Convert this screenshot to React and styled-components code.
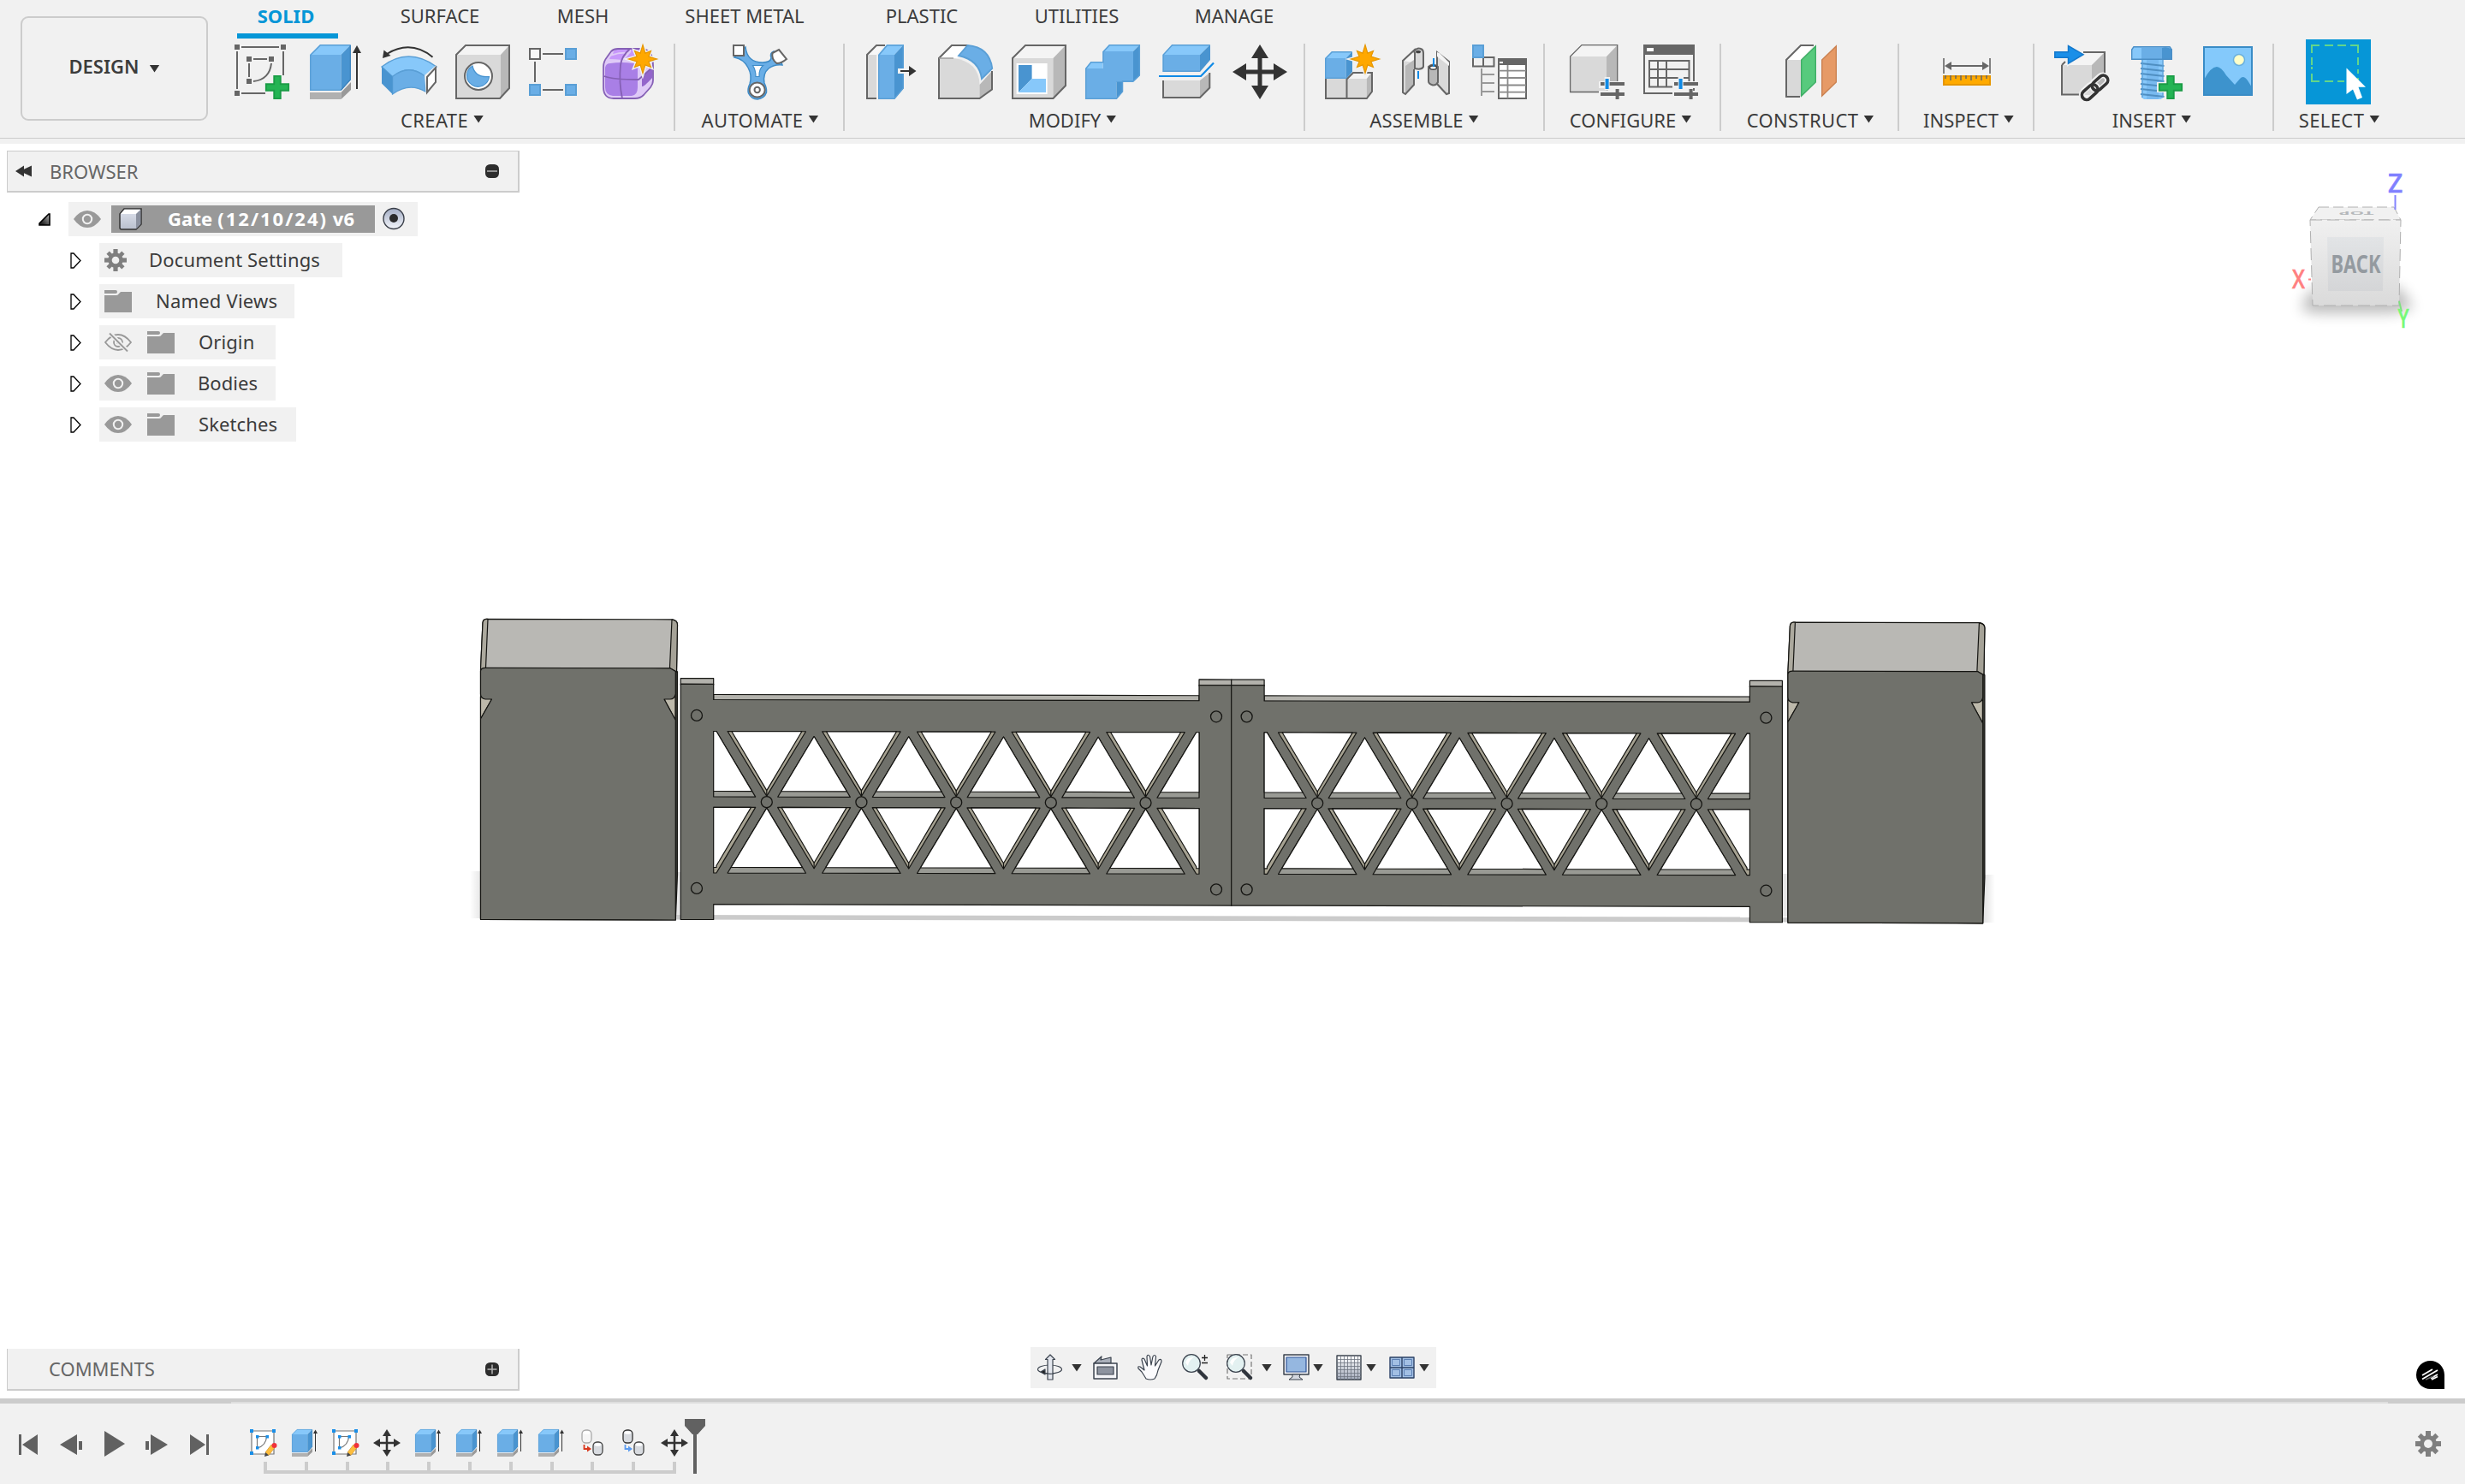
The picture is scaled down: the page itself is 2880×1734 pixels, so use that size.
import React from "react";
import styled, { createGlobalStyle } from "styled-components";

const GlobalStyle = createGlobalStyle`
  * { box-sizing: border-box; }
  body { margin: 0; background: #ffffff; }
  svg { display: block; }
`;

const C = {
  bar: "#f1f1f1",
  line: "#cccccc",
  text: "#3c3c3c",
  muted: "#666666",
  accent: "#0696d7",
  blue: "#6aaee6",
  blueTop: "#87c8fa",
  blueSide: "#4994d0",
  blueEdge: "#5a9fd6",
  ink: "#333333",
  face: "#d9d9d9",
  side: "#b8b8b8",
};

/* ---------- shell ---------- */

const Screen = styled.div`
  display: flex;
  flex-direction: column;
  width: 2880px;
  height: 1734px;
  overflow: hidden;
  background: #ffffff;
  color: ${C.text};
  font-family: "Noto Sans", "Open Sans", sans-serif;
  font-size: 22px;
  line-height: 30px;
  white-space: nowrap;
`;

const Toolbar = styled.header`
  display: flex;
  height: 168px;
  flex: none;
  padding-left: 24px;
  background: linear-gradient(${C.line}, ${C.line}) 0 161px / 100% 1px no-repeat ${C.bar};
`;

const Workspace = styled.button`
  display: flex;
  align-items: center;
  justify-content: center;
  gap: 12px;
  width: 219px;
  height: 122px;
  margin: 19px 3px 0 0;
  padding: 0 0 6px;
  border: 2px solid ${C.line};
  border-radius: 9px;
  background: transparent;
  color: ${C.text};
  font: 600 22px/30px "Noto Sans", sans-serif;
`;

const Caret = styled.i`
  width: 12px;
  height: 9px;
  flex: none;
  background: ${C.ink};
  clip-path: polygon(0 0, 100% 0, 50% 100%);
  transform: translateY(${(p) => p.$dy || 0}px);
`;

const Ribbon = styled.div`
  display: flex;
  flex-direction: column;
`;

const Tabs = styled.nav`
  display: flex;
  height: 45px;
  padding-left: 31px;
`;

const Tab = styled.a`
  display: flex;
  justify-content: center;
  width: ${(p) => p.$w}px;
  height: 45px;
  margin-left: ${(p) => p.$gap || 0}px;
  padding-top: 3px;
  padding-right: ${(p) => (p.$active ? 4 : 0)}px;
  border-bottom: 6px solid ${(p) => (p.$active ? C.accent : "transparent")};
  color: ${(p) => (p.$active ? C.accent : C.text)};
  font-weight: ${(p) => (p.$active ? 700 : 400)};
`;

const Groups = styled.div`
  display: flex;
  padding-top: 1px;
`;

const Group = styled.section`
  display: flex;
  flex-direction: column;
  width: ${(p) => p.$w}px;
  height: 112px;
  background: ${(p) => (p.$last ? "none" : `linear-gradient(${C.line}, ${C.line}) right 5px / 2px 102px no-repeat`)};
`;

const IconRow = styled.div`
  display: flex;
  flex: none;
  gap: 22px;
  height: 76px;
  padding: 6px 0 0 ${(p) => p.$pad}px;
`;

const GroupLabel = styled.div`
  display: flex;
  align-items: center;
  justify-content: center;
  gap: 6px;
  height: 30px;
  margin-top: 3px;
  padding-left: ${(p) => Math.max(0, (p.$nudge || 0) * 2)}px;
  padding-right: ${(p) => Math.max(0, -(p.$nudge || 0) * 2)}px;
  letter-spacing: ${(p) => p.$ls || 0}px;
`;

const SelectTile = styled.div`
  width: 76px;
  height: 76px;
  margin: -6px 0 0 -6px;
  padding: 6px;
  background: ${C.accent};
`;

const Viewport = styled.main`
  position: relative;
  flex: 1;
  background: #ffffff;
`;

const Scene = styled.svg`
  position: absolute;
  left: 0;
  top: 0;
`;

/* ---------- browser ---------- */

const BrowserDock = styled.aside`
  position: absolute;
  left: 8px;
  top: 8px;
  display: flex;
  flex-direction: column;
  width: 599px;
`;

const PanelBar = styled.div`
  display: flex;
  align-items: center;
  gap: 20px;
  width: 599px;
  height: 49px;
  padding: 0 22px 0 ${(p) => p.$pad}px;
  border: 1px solid ${C.line};
  border-width: ${(p) => (p.$flat ? "0 2px 2px 1px" : "1px 2px 2px 1px")};
  background: ${C.bar};
  color: ${C.muted};
`;

const PanelTitle = styled.span`
  flex: 1;
  padding-bottom: 1px;
`;

const Tree = styled.ul`
  display: flex;
  flex-direction: column;
  gap: 8px;
  margin: 0;
  padding: 11px 0 0 36px;
  list-style: none;
`;

const TreeRow = styled.li`
  display: flex;
  align-items: center;
  height: 40px;
  padding-left: ${(p) => (p.$root ? 1 : 38)}px;
`;

const Twisty = styled.span`
  display: flex;
  width: ${(p) => (p.$root ? 35 : 34)}px;
  flex: none;
`;

const Chip = styled.div`
  display: flex;
  align-items: center;
  width: ${(p) => p.$w}px;
  height: 40px;
  padding-left: 6px;
  background: ${C.bar};
`;

const Glyph = styled.span`
  display: flex;
  flex: none;
  width: 32px;
  margin-right: ${(p) => p.$after || 0}px;
`;

const NodeText = styled.span`
  padding-bottom: 2px;
  letter-spacing: ${(p) => p.$ls || 0}px;
`;

const Selected = styled.div`
  display: flex;
  align-items: center;
  gap: 30px;
  width: 308px;
  height: 32px;
  margin-right: 8px;
  padding-left: 9px;
  background: #999999;
  color: #ffffff;
  font-weight: 700;
`;

const DateRun = styled.span`
  letter-spacing: 2px;
`;

const CommentsDock = styled.aside`
  position: absolute;
  left: 8px;
  bottom: 9px;
`;

/* ---------- navigation bar ---------- */

const NavBar = styled.div`
  position: absolute;
  left: 1204px;
  bottom: 12px;
  display: flex;
  align-items: center;
  width: 474px;
  height: 48px;
  background: ${C.bar};
`;

const NavItem = styled.span`
  display: flex;
  align-items: center;
  margin-left: ${(p) => p.$ml}px;
  gap: ${(p) => p.$gap || 0}px;
`;

const Badge = styled.div`
  position: absolute;
  right: 24px;
  bottom: 11px;
`;

const CubeHolder = styled.div`
  position: absolute;
  left: 2640px;
  top: 12px;
`;

/* ---------- timeline ---------- */

const Timeline = styled.footer`
  display: flex;
  flex: none;
  height: 100px;
  border-top: 4px solid ${C.line};
  background:
    linear-gradient(${C.line}, ${C.line}) 0 0 / 270px 2px no-repeat,
    linear-gradient(${C.line}, ${C.line}) 2790px 0 / 90px 2px no-repeat,
    linear-gradient(#dedede, #dedede) 0 0 / 100% 2px no-repeat,
    ${C.bar};
`;

const Player = styled.div`
  display: flex;
  width: 292px;
  padding: 34px 0 0 22px;
`;

const PlayerButton = styled.span`
  width: ${(p) => p.$w}px;
  margin-right: ${(p) => p.$mr}px;
`;

const Track = styled.div`
  display: flex;
  flex-direction: column;
  width: 512px;
  padding-top: 32px;
`;

const Features = styled.div`
  display: flex;
  gap: 16px;
`;

const Ruler = styled.div`
  display: flex;
  justify-content: space-between;
  width: 482px;
  height: 14px;
  margin: 6px 0 0 16px;
  border-bottom: 4px solid ${C.line};
`;

const Notch = styled.i`
  width: 4px;
  height: 10px;
  background: ${C.line};
`;

const Playhead = styled.svg`
  margin: 20px 0 0 -4px;
`;

const Settings = styled.span`
  margin: 34px 28px 0 auto;
`;

/* ---------- toolbar icons ---------- */

const Icon = ({ children, size = 64, box = 64 }) => (
  <svg width={size} height={size} viewBox={`0 0 ${box} ${box}`} fill="none" overflow="visible">
    {children}
  </svg>
);

const Plus = () => (
  <path
    d="M46 36h8v10h10v8H54v10h-8V54H36v-8h10z"
    fill="#24b454"
    stroke="#1a9c46"
    strokeWidth="2"
    transform="translate(50 50) scale(.94) translate(-50 -50)"
  />
);

const PlusHalo = () => <path d="M44 34h12v10h10v12H56v10H44V56H34V44h10z" fill={C.bar} />;

const Spark = ({ x, y }) => {
  const pts = [];
  for (let i = 0; i < 16; i += 1) {
    const r = i % 2 ? 7.5 : i % 4 === 0 ? 16.5 : 13.5;
    const a = (i * Math.PI) / 8 - Math.PI / 2;
    pts.push(`${(x + r * Math.cos(a)).toFixed(1)},${(y + r * Math.sin(a)).toFixed(1)}`);
  }
  return (
    <g>
      <polygon points={pts.join(" ")} fill={C.bar} stroke={C.bar} strokeWidth="4" />
      <polygon points={pts.join(" ")} fill="#ffa800" stroke="#e69600" strokeWidth="1.2" />
    </g>
  );
};

const SketchIcon = () => (
  <Icon>
    <g fill="#666">
      <path d="M0 0h6v6H0zM54 0h6v6h-6zM0 54h6v6H0zM14 14h6v6h-6zM40 14h6v6h-6zM14 40h6v6h-6z" />
    </g>
    <path d="M8 3h44M3 8v44M57 8v28M8 57h28M22 17h16M17 22v16M43 22q-2 19-21 21" stroke="#666" strokeWidth="2" />
    <Plus />
  </Icon>
);

const Extrude = () => (
  <g>
    <path d="M2 56h36.500v8H2z" fill="#b0b0b0" />
    <path d="M38.500 56L50 44v9L38.500 64z" fill="#999" />
    <path d="M2 12h36.500v42H2z" fill={C.blue} />
    <path d="M2 12L14 0h36L38.500 12z" fill={C.blueTop} />
    <path d="M38.500 12L50 0v41L38.500 54z" fill={C.blueSide} />
    <path d="M2.800 12.300L14.300.800h35M2.800 12v41.200h35.700" stroke={C.blueEdge} strokeWidth="1.400" />
    <path d="M49.300 1v40L38.500 53" stroke="#3f86bf" strokeWidth="1.400" />
    <path d="M57 6v46" stroke={C.ink} strokeWidth="2" />
    <path d="M57 1l5 9H52z" fill={C.ink} />
  </g>
);

const ExtrudeIcon = () => (
  <Icon>
    <Extrude />
  </Icon>
);

const RevolveIcon = () => (
  <Icon>
    <path d="M59.500 14.700Q34-6 6 11" stroke={C.ink} strokeWidth="2" />
    <path d="M1 16L2.500 6.500 10.500 13z" fill={C.ink} />
    <path d="M0 26Q31 2 64 26L51 37.500Q32 22 12.600 37.500z" fill={C.blueTop} stroke={C.blueEdge} strokeWidth="1.400" />
    <path d="M12.600 37.500Q32 22 51 37.500V55Q32 44 12.600 58z" fill={C.blue} stroke={C.blueEdge} strokeWidth="1.400" />
    <path d="M0 26l12.600 11.500V58L0 45.500z" fill={C.blueSide} />
    <path d="M50 36L64 24v22L52 60z" fill={C.bar} />
    <path d="M53 38l10-11v17L53 56z" fill="#fff" stroke="#666" strokeWidth="2" />
  </Icon>
);

const HoleIcon = () => (
  <Icon>
    <path d="M1 12h52v51H1z" fill={C.face} />
    <path d="M1 12L12 1h51L53 12z" fill="#f4f4f4" />
    <path d="M53 12L63 1v50L53 63z" fill={C.side} />
    <path d="M1 12L12 1h51v50L52 63H1z" stroke="#666" strokeWidth="2" />
    <circle cx="27" cy="37" r="16" fill="#fff" stroke="#666" strokeWidth="2" />
    <path d="M20 25Q23 39 39.500 37.500A13 13 0 1 1 20 25z" fill={C.blue} stroke={C.blueSide} strokeWidth="1.200" />
  </Icon>
);

const PatternIcon = () => (
  <Icon>
    <path d="M16 11h24M7 20v24M16 53h24" stroke="#666" strokeWidth="2" />
    <path d="M1 5h12v12H1z" stroke="#666" strokeWidth="2" fill="#f8f8f8" />
    <path d="M43 5h12v12H43zM1 47h12v12H1zM43 47h12v12H43z" fill={C.blue} stroke={C.blueEdge} strokeWidth="2" />
  </Icon>
);

const FormIcon = () => (
  <Icon>
    <path d="M1 26Q1 20 5 15L10 8Q13 5 18 5H46Q59 6 59 24V42Q59 46 56 50L48 59Q44 63 38 63H13Q1 63 1 50z" fill="#dfcaf7" />
    <path d="M13 8Q15 5 20 5H33L30 9Q22 8 12 11zM8 17Q9 13 12 13Q20 10 28 11L23 18Q14 17 8 17z" fill="#c797fb" />
    <path d="M25 18L33 9V5H46L44 18z" fill="#c797fb" />
    <path d="M3 27Q4 22 9 22Q22 20 36 22Q41 23 41 28V50Q41 59 34 60H12Q3 59 3 50z" fill="#a97fe6" />
    <path d="M46 40V49Q48 50 58 39V26Q56 26 46 40z" fill="#9365cb" />
    <path
      d="M1 26Q1 20 5 15L10 8Q13 5 18 5H46Q59 6 59 24V42Q59 46 56 50L48 59Q44 63 38 63H13Q1 63 1 50zM32 5Q22 14 21 24Q19 44 23 63M2 37Q12 41 42 41Q48 36 59 26"
      stroke="#8560b5"
      strokeWidth="1.800"
    />
    <Spark x={47} y={17} />
  </Icon>
);

const AutomateIcon = () => (
  <Icon>
    <path
      d="M2 15Q13 17 18 27Q23 36 20 46Q17 52 18.500 57Q22 64 29 64Q37 63 39.500 56Q40 51 37 45Q35 34 42 28Q49 23 58 24L57 21Q48 18 48 8Q43 10 45 16Q44 21 35 21Q17 21 15 3z"
      fill={C.blue}
      stroke="#3f8cc8"
      strokeWidth="1.500"
    />
    <path d="M23.500 24.500h12q-5 4-4.500 13h-4q0-8-3.500-13z" fill="#fff" stroke="#3f8cc8" strokeWidth="1.200" />
    <path d="M1 1h12v12H1z" fill="#fff" stroke="#666" strokeWidth="2" />
    <path d="M54 6L63 17Q57 22 51.500 22Q45 17 46.500 10z" fill="#fff" stroke="#666" strokeWidth="2" />
    <ellipse cx="28.700" cy="53" rx="9" ry="8.500" fill="#fff" stroke="#666" strokeWidth="2" />
    <circle cx="28.700" cy="53" r="3.200" stroke="#666" strokeWidth="2" />
  </Icon>
);

const PressPullIcon = () => (
  <Icon>
    <path d="M3 12h11v51H3z" fill={C.face} />
    <path d="M3 12L14 1h10L14 12z" fill="#f8f8f8" />
    <path d="M24 1H14L3 12v51h11" stroke="#666" strokeWidth="2" />
    <path d="M16 12h19v52H16z" fill={C.blue} />
    <path d="M16 12L26 0h20L35 12z" fill={C.blueTop} />
    <path d="M35 12L46 0v51L35 64z" fill={C.blueSide} />
    <path d="M45.300 1H26.500L16.700 12.500v50.800H35L45.300 51z" stroke={C.blueEdge} strokeWidth="1.400" />
    <path d="M39 28h11v-6l13 9-13 9v-6H39z" fill={C.bar} />
    <path d="M42 30h10v-5l8.500 6-8.500 6v-5H42z" fill={C.ink} />
  </Icon>
);

const FilletIcon = () => (
  <Icon>
    <path d="M1 16L16 1h18L22 16z" fill="#fff" />
    <path d="M1 16h17Q48 20 48.500 47V63H1z" fill={C.face} />
    <path d="M48.500 47L63 31v22L48.500 63z" fill={C.side} />
    <path d="M35 1H16L1 16v47h47.500L63 52.500V31" stroke="#666" strokeWidth="2" />
    <path d="M1 16h17" stroke="#999" strokeWidth="1.400" />
    <path d="M24 13L34.500 1Q60 3 63.300 28L51 40Q48 18 24 13z" fill={C.blue} stroke={C.blueEdge} strokeWidth="1.800" />
  </Icon>
);

const ShellIcon = () => (
  <Icon>
    <path d="M1 16h47.500v47H1z" fill={C.face} />
    <path d="M1 16L16 1h47L48.500 16z" fill="#f4f4f4" />
    <path d="M48.500 16L63 1v47L48.500 63z" fill={C.side} />
    <path d="M1 16L16 1h47v47L48.500 63H1z" stroke="#666" strokeWidth="2" />
    <path d="M5.600 22h36v36h-36z" fill="#fff" />
    <path d="M8 24h15.600v16L8 56z" fill={C.blueSide} />
    <path d="M23.600 40H40v16H8z" fill={C.blueTop} />
  </Icon>
);

const CombineIcon = () => (
  <Icon>
    <path d="M0 28h20.500V8H56v36H36.500v20H0z" fill={C.blue} />
    <path d="M0 28l6.400-8h14.100v8zM20.500 8L28 0h36l-8 8z" fill={C.blueTop} />
    <path d="M56 8l8-8v36l-8 7.500zM36.500 43.500h7.200V55l-7.200 9z" fill={C.blueSide} />
    <path d="M.700 28.300L6.700 20.700H21V8.500L28.300.700h35V36L56 43H43.500v12l-7.200 8.300H.700z" stroke={C.blueEdge} strokeWidth="1.500" />
  </Icon>
);

const SplitIcon = () => (
  <Icon>
    <path d="M4.500 12H48v20H4.500z" fill={C.blue} />
    <path d="M4.500 12L15.500 0H60L48 12z" fill={C.blueTop} />
    <path d="M48 12L60 0v18L48 32z" fill={C.blueSide} />
    <path d="M48 31.300H5.200V12L15.500.700h44" stroke={C.blueEdge} strokeWidth="1.400" />
    <path d="M5 42h43v20H5z" fill={C.face} />
    <path d="M48 42l11.500-9v17L48 61z" fill={C.side} />
    <path d="M5 42v20h43l11.300-11.500V33" stroke="#666" strokeWidth="2" />
    <path d="M0 37h49L64 21.500" stroke="#0f8ae6" strokeWidth="2.200" />
  </Icon>
);

const Move = () => (
  <path
    d="M32 0l10 16h-7.500v13.500H48V22l16 10-16 10v-7.500H34.500V48H42L32 64 22 48h7.500V34.500H16V42L0 32l16-10v7.500h13.500V16H22z"
    fill={C.ink}
  />
);

const MoveIcon = () => (
  <Icon>
    <Move />
  </Icon>
);

const ComponentIcon = () => (
  <Icon>
    <path d="M1 40h47.800v23H1z" fill={C.face} />
    <path d="M25 40l7-8h23l-7 8z" fill="#f4f4f4" />
    <path d="M48.800 40l6.400-8v23l-6.400 8z" fill={C.side} />
    <path d="M1 40v23h47.800l6.200-8V33H33l-7.500 7.500V63" stroke="#666" strokeWidth="2" />
    <path d="M0 16h24.700v24H0z" fill={C.blue} />
    <path d="M0 16l8-8h24l-7.300 8z" fill={C.blueTop} />
    <path d="M24.700 16L32 8v24l-7.300 8z" fill={C.blueSide} />
    <path d="M.700 16.500L8.300 8.700H31M.700 16v23.300h24" stroke={C.blueEdge} strokeWidth="1.400" />
    <Spark x={47} y={17} />
  </Icon>
);

const JointIcon = () => (
  <Icon>
    <path d="M5 19L20 5v14l-3 3v27L8 58H5z" fill={C.face} />
    <path d="M5 19L20 5v13l-3 3z" fill="#f4f4f4" />
    <path d="M8 25l10-7v30L8 58z" fill={C.side} />
    <path d="M20 5L5 19v37l3 2 10-11V29" stroke="#666" strokeWidth="2" />
    <path d="M18 8Q22 3 26 5Q29 6 29 10V26Q27 30 19 28V10z" fill={C.face} stroke="#666" strokeWidth="2" />
    <ellipse cx="23" cy="8.500" rx="3" ry="1.800" fill="#444" />
    <path d="M23 31v9M41 16v8" stroke="#0f8ae6" strokeWidth="2" />
    <path d="M45 9l14 11v37l-3 1-11-12z" fill={C.face} stroke="#666" strokeWidth="2" />
    <path d="M45 9l3 1 11 11v4L45 14z" fill="#f4f4f4" />
    <path d="M35 26Q40 21 46 26V44Q44 48 40 47.500Q35 46 35 43z" fill={C.side} stroke="#666" strokeWidth="2" />
    <ellipse cx="40.500" cy="27" rx="4" ry="2.200" fill="#eee" stroke="#444" strokeWidth="1.400" />
    <path d="M41 17v9" stroke="#0f8ae6" strokeWidth="2" />
  </Icon>
);

const BomIcon = () => (
  <Icon>
    <path d="M1 15h24.500v10.500H1zM13 15v10.500" stroke="#666" strokeWidth="2" />
    <path d="M1 1h12v14H1z" fill={C.blue} stroke={C.blueEdge} strokeWidth="2" />
    <path d="M11 28v32M11 35h15M11 45h15M11 55h15" stroke="#999" strokeWidth="2" />
    <path d="M31 17h32v46H31z" fill="#fff" stroke="#666" strokeWidth="2" />
    <path d="M30 16h34v8H30z" fill="#666" />
    <path d="M32 20h4v2h-4z" fill="#fff" />
    <path d="M41.500 24v39M31 30.700h32M31 39h32M31 47.500h32M31 55.700h32" stroke="#8a8a8a" strokeWidth="1.800" />
  </Icon>
);

const Sliders = () => (
  <g>
    <path d="M34 43h8v-5h5v5h18v8H34z" fill={C.bar} />
    <path d="M34 54h32v9H34z" fill={C.bar} />
    <path d="M36 46h28M36 58h28" stroke="#666" strokeWidth="4" />
    <path d="M55.600 52v12" stroke="#666" strokeWidth="4" />
    <path d="M43.600 38v15" stroke={C.bar} strokeWidth="6" />
    <path d="M43.600 40v12" stroke="#0f8ae6" strokeWidth="4" />
  </g>
);

const ConfigureIcon = () => (
  <Icon>
    <path d="M1 14h42v41.500H1z" fill={C.face} />
    <path d="M1 14L14 .600h42L43 14z" fill="#f4f4f4" />
    <path d="M43 14L55.500 1v42L43 55z" fill={C.side} />
    <path d="M43 55.500H.600V14L14 .600h41.700V44" stroke="#666" strokeWidth="1.300" />
    <Sliders />
  </Icon>
);

const ConfigureTableIcon = () => (
  <Icon>
    <path d="M1 1h58v56H1z" stroke="#666" strokeWidth="2" />
    <path d="M0 0h60v12H0z" fill="#666" />
    <path d="M4 4h8v4H4z" fill="#fff" />
    <path d="M7 19h46.500v30.500H7zM17 19v30M27 19v30M7 29h46M7 39h46" stroke="#666" strokeWidth="2" />
    <Sliders />
  </Icon>
);

const ConstructIcon = () => (
  <Icon>
    <path d="M3 18h17v43H3z" fill={C.face} />
    <path d="M3 18L20 1h15L20 18z" fill="#fff" />
    <path d="M35 1H20L3 18v43h16" stroke="#666" strokeWidth="2" />
    <path d="M20.700 18L37.300 2v42L20.700 60z" fill="#57ca7d" stroke="#3fae66" strokeWidth="1.400" />
    <path d="M44.700 18L61.300 2v42L44.700 60z" fill="#e69a66" stroke="#cb8150" strokeWidth="1.400" />
  </Icon>
);

const InspectIcon = () => (
  <Icon>
    <path d="M5 16v18M59 16v18" stroke="#666" strokeWidth="1.600" />
    <path d="M10 25h44" stroke="#666" strokeWidth="2" />
    <path d="M6 25l8-5v10zM58 25l-8-5v10z" fill="#666" />
    <path d="M5 37h54v10H5z" fill="#ffaa00" stroke="#e69600" strokeWidth="2" />
    <path d="M7 36v4M13 36v6M19 36v4M25 36v6M31 36v4M37 36v6M43 36v4M49 36v6M55 36v4" stroke="#666" strokeWidth="1.500" />
  </Icon>
);

const LinkIcon = () => (
  <Icon>
    <path d="M9 24h35v35H9z" fill={C.face} />
    <path d="M9 24L24 9h35L44 24z" fill="#f4f4f4" />
    <path d="M44 24L59 9v34L44 59z" fill={C.side} />
    <path d="M34 9h25v30M9 24v34.500h22M9 24l4-4" stroke="#666" strokeWidth="2" />
    <path d="M0 7h15V-1L37 12 15 26V17H0z" fill={C.bar} />
    <path d="M.800 8.800h15.700V1.500L34 11.700 16.500 22.200v-7H.800z" fill="#1a8fe8" stroke="#1378cc" strokeWidth="1.500" />
    <g transform="rotate(-42 48 50)" fill="none">
      <rect x="29" y="44" width="21" height="12" rx="6" stroke={C.bar} strokeWidth="7" />
      <rect x="45" y="44" width="21" height="12" rx="6" stroke={C.bar} strokeWidth="7" />
      <rect x="29" y="44.500" width="21" height="11" rx="5.500" stroke={C.ink} strokeWidth="3.600" />
      <rect x="45" y="44.500" width="21" height="11" rx="5.500" stroke={C.ink} strokeWidth="3.600" />
    </g>
  </Icon>
);

const BoltIcon = () => (
  <Icon>
    <path d="M16 17h25.500v45l-3 2H19l-3-2z" fill={C.blueTop} />
    <path d="M22 17h14v47H22z" fill="#78baf0" />
    {[22, 28, 34, 40, 46, 52, 58].map((y) => (
      <path key={y} d={`M15 ${y}l27.500 3`} stroke="#4f8fc2" strokeWidth="2" />
    ))}
    <path d="M17 18v44M41 18v44" stroke="#5a9fd6" strokeWidth="1.200" />
    <path d="M7 2h42l3 4v12H4V6z" fill={C.blueTop} />
    <path d="M16 4h24v14H16z" fill={C.blue} />
    <path d="M40 4q6-2 12 2v12H40z" fill={C.blueSide} />
    <path d="M7 2.700h42l2.300 3.300v11.300H4.700V6z" stroke="#4a8ec6" strokeWidth="1.400" />
    <PlusHalo />
    <Plus />
  </Icon>
);

const PictureIcon = () => (
  <Icon>
    <path d="M3 3h56v56H3z" fill="#84c9fb" />
    <path d="M3 41Q11 26 18 26Q23 26 29 36L39 47L45 40Q49 35 54 42L59 50V59H3z" fill="#3d93cd" />
    <path d="M3 3h56v56H3z" stroke="#3a8cc6" strokeWidth="2" />
    <circle cx="44" cy="18" r="6.500" fill="#ffffc9" stroke="#6bb0dd" strokeWidth="1.500" />
  </Icon>
);

const SelectIcon = () => (
  <Icon>
    <path d="M1 10V1h9M46 1h9v9M1 34v9h9M16 1h10M31 1h10M1 15v9M55 15v9M1 26v3M55 29v5M16 43h10M31 43h8M55 39v4" stroke="#63d68a" strokeWidth="2" />
    <path d="M41.500 27.500L64 49.700H55.500L60 62l-6 2.500L49 52.500L41.500 58z" fill="#fff" />
  </Icon>
);

/* ---------- small glyphs ---------- */

const Eye = () => (
  <svg width="32" height="26" viewBox="0 0 32 26">
    <path d="M0 13Q7 3 16 3T32 13Q25 23 16 23T0 13z" fill="#999" />
    <circle cx="16" cy="13" r="5.200" fill="none" stroke={C.bar} strokeWidth="2" />
  </svg>
);

const EyeOff = () => (
  <svg width="32" height="26" viewBox="0 0 32 26" fill="none" stroke="#999" strokeWidth="1.800">
    <path d="M1 13Q8 4 16 4T31 13Q24 22 16 22T1 13z" />
    <circle cx="16" cy="13" r="5" />
    <circle cx="16" cy="13" r="2" fill="#999" stroke="none" />
    <path d="M7 3l20 20" stroke={C.bar} strokeWidth="5" />
    <path d="M6 2.500l21 21" />
  </svg>
);

const Folder = () => (
  <svg width="32" height="26" viewBox="0 0 32 26">
    <path d="M1 0h12q2 0 2 2t-2 2H0V0z" fill="#999" />
    <path d="M0 6h14q2 0 3-2l2-2h13v24H0z" fill="#999" />
  </svg>
);

const Gear = ({ size, color, hole = C.bar }) => (
  <svg width={size} height={size} viewBox="-15 -15 30 30">
    <circle r="10" fill={color} />
    {[0, 45, 90, 135].map((a) => (
      <rect
        key={a}
        x={a % 90 ? -2.7 : -3}
        y={a % 90 ? -14.5 : -15}
        width={a % 90 ? 5.4 : 6}
        height={a % 90 ? 29 : 30}
        fill={color}
        transform={`rotate(${a})`}
      />
    ))}
    <circle r="5" fill={hole} />
  </svg>
);

const DocCube = () => (
  <svg width="27" height="27" viewBox="0 0 27 27">
    <defs>
      <linearGradient id="docFace" x1="0" y1="0" x2="0" y2="1">
        <stop offset="0" stopColor="#dfe3ee" />
        <stop offset="1" stopColor="#b9bfcd" />
      </linearGradient>
    </defs>
    <path d="M1 7l5-6h20v18l-6 6H3q-2 0-2-2z" fill="url(#docFace)" stroke="#333" strokeWidth="1.500" />
    <path d="M2 7l4.500-5.200H25L20 7z" fill="#fff" />
    <path d="M20 7l5.200-5v17L20 24.500z" fill="#8b919f" />
  </svg>
);

const Radio = () => (
  <svg width="28" height="28" viewBox="0 0 28 28">
    <defs>
      <linearGradient id="radioFill" x1="0" y1="0" x2="0" y2="1">
        <stop offset="0" stopColor="#a3adc4" />
        <stop offset="1" stopColor="#f4f6fb" />
      </linearGradient>
    </defs>
    <circle cx="14" cy="13.500" r="12" fill="url(#radioFill)" stroke="#3a3f49" strokeWidth="1.400" />
    <circle cx="14" cy="13" r="5" fill="#2b2b2b" />
  </svg>
);

const RootTwisty = () => (
  <svg width="14" height="15" viewBox="0 0 14 15">
    <defs>
      <linearGradient id="twisty" x1="0" y1="1" x2="1" y2="0">
        <stop offset="0.200" stopColor="#222" />
        <stop offset="1" stopColor="#bbb" />
      </linearGradient>
    </defs>
    <path d="M13 1v13H1v-2L12 1z" fill="url(#twisty)" stroke="#000" strokeWidth="1.600" />
  </svg>
);

const ChildTwisty = () => (
  <svg width="13" height="19" viewBox="0 0 13 19">
    <path d="M1 1h3l8 8.500L4 18H1z" fill="#fff" stroke="#000" strokeWidth="1.300" />
  </svg>
);

const Collapse = () => (
  <svg width="20" height="14" viewBox="0 0 20 14">
    <path d="M0 7L10 .500v4.300L19 .500v13L10 9.200v4.300z" fill={C.ink} />
  </svg>
);

const RoundMark = ({ plus }) => (
  <svg width="16" height="16" viewBox="0 0 16 16">
    <rect width="16" height="16" rx="5.500" fill="#2d2d2d" />
    <path d={plus ? "M2.500 8h11M8 2.500v11" : "M2 8h12"} stroke="#b5b5b5" strokeWidth="1.500" />
  </svg>
);

/* ---------- navigation icons ---------- */

const NavSvg = ({ children }) => (
  <svg width="30" height="32" viewBox="0 0 30 32" fill="none" stroke="#3b434e" strokeWidth="1.200" strokeLinejoin="round" overflow="visible">
    {children}
  </svg>
);

const Orbit = () => (
  <NavSvg>
    <ellipse cx="14.500" cy="18" rx="14" ry="5" />
    <path d="M15 1l5.500 5.500H18V30H12V6.500H9.500z" fill="#e4e7ee" />
    <path d="M5 21.500q7 2.500 14 1.500" />
    <path d="M4 21l5-3v6z" fill="#222" />
  </NavSvg>
);

const LookAt = () => (
  <NavSvg>
    <path d="M1 11L10 3l-1 4 12-3v7z" fill="#aab0bb" />
    <path d="M1 11h27v18H1z" fill="#f4f5f8" strokeWidth="1.500" />
    <path d="M5 15h19v9H5z" fill="#8d939f" />
  </NavSvg>
);

const Hand = () => (
  <NavSvg>
    <path
      d="M10 29Q7 24 5 21L1 17Q0 14 3 15L8 19L5 7Q5 4 8 6L11.500 14L11 3Q12-.500 14.500 3L16 13L18 3Q20 0 21.500 3L20.500 14L25 7Q28 5 28 9L24 19Q23 25 20 29Q15 31 10 29z"
      fill="#fbfbfd"
    />
  </NavSvg>
);

const Lens = ({ fit }) => (
  <NavSvg>
    {fit && <path d="M1 1h28v28H1z" stroke="#777" strokeDasharray="6 3" />}
    <path d="M20 20l8 8" stroke="#30353d" strokeWidth="4.500" strokeLinecap="round" />
    <circle cx="11" cy="11" r="10.300" fill="#e3f1f1" />
    <path d="M4 10Q6 3 14 4Q8 7 7 14z" fill="#fff" stroke="none" />
    {!fit && <path d="M23 4.500h7M26.500 1v7M23 10.500h7" stroke="#222" strokeWidth="1.300" />}
  </NavSvg>
);

const Monitor = () => (
  <NavSvg>
    <path d="M1 1h29v23H1z" fill="#f2f3f6" strokeWidth="1.500" />
    <path d="M4 4h23v17H4z" fill="#95b7e0" stroke="#2f5496" />
    <path d="M11 24h9l-1 3 4 3H7l4-3z" fill="#d4d8e0" strokeWidth="1" />
  </NavSvg>
);

const GridGlyph = () => (
  <NavSvg>
    <defs>
      <linearGradient id="gridFill" x1="0" y1="0" x2="0" y2="1">
        <stop offset="0" stopColor="#fff" />
        <stop offset="1" stopColor="#a3abbb" />
      </linearGradient>
    </defs>
    <path d="M1 2h28v28H1z" fill="url(#gridFill)" strokeWidth="1.400" />
    <path
      d="M5.500 2v28M9.500 2v28M13.500 2v28M17.500 2v28M21.500 2v28M25.500 2v28M1 6.500h28M1 10.500h28M1 14.500h28M1 18.500h28M1 22.500h28M1 26.500h28"
      stroke="#6f7580"
      strokeWidth=".800"
    />
  </NavSvg>
);

const Panes = () => (
  <NavSvg>
    <path d="M1 4h28v24H1z" fill="#a3c0e4" stroke="#2b4166" strokeWidth="1.400" />
    <path d="M15 4v24M1 16h28" stroke="#2b4166" strokeWidth="1.400" />
    <path d="M3.500 6.500h9v7h-9zM17.500 6.500h9v7h-9zM3.500 18.500h9v7h-9zM17.500 18.500h9v7h-9z" stroke="#5c80b4" strokeWidth="1" />
  </NavSvg>
);

/* ---------- timeline icons ---------- */

const SketchFeature = () => (
  <Icon size={32} box={32}>
    <path d="M2 2h26v27H2z" fill="#fff" stroke="#777" strokeWidth="1.200" />
    <path d="M8.500 8.500h11Q19 19 8.500 22z" stroke="#777" strokeWidth="1.200" />
    <path d="M0 0h4v4H0zM26 0h4v4h-4zM0 26h4v4H0zM7 7h3.500v3.500H7zM18.500 7H22v3.500h-3.500zM7 20h3.500v3.500H7z" fill="#1a8fe8" />
    <path d="M18 27l7-9 4 3.500-7 9z" fill="#fdbd3c" stroke="#c98a1c" strokeWidth=".600" />
    <path d="M18 27l4 3.500-5 1.500z" fill="#444" />
    <circle cx="28.500" cy="19" r="3" fill="#f0323c" />
  </Icon>
);

const ExtrudeFeature = () => (
  <Icon size={32}>
    <Extrude />
  </Icon>
);

const MoveFeature = () => (
  <Icon size={32}>
    <Move />
  </Icon>
);

const CopyFeature = ({ color, ghost }) => (
  <Icon size={32} box={32}>
    <rect x="4" y="1" width="11" height="15" rx="4.500" fill={ghost ? "#f6f6f6" : "#d8dbe0"} stroke={ghost ? "#aaa" : "#333"} strokeWidth="1.300" />
    <ellipse cx="9.500" cy="4" rx="4" ry="1.800" fill="#fff" />
    <rect x="17" y="15" width="11" height="15" rx="4.500" fill="#d8dbe0" stroke="#444" strokeWidth="1.300" />
    <ellipse cx="22.500" cy="18" rx="4" ry="1.800" fill="#fff" />
    <path d="M6.500 18v5h4" stroke={color} strokeWidth="1.800" />
    <path d="M10 19.500l5 3.500-5 3.500z" fill={color} />
  </Icon>
);

/* ---------- view cube ---------- */

const ViewCube = () => (
  <svg width="240" height="220" viewBox="0 0 240 220" fontFamily="Noto Sans, sans-serif">
    <defs>
      <linearGradient id="cubeFace" x1="0" y1="0" x2="0" y2="1">
        <stop offset="0" stopColor="#f0f0f0" />
        <stop offset="1" stopColor="#dadada" />
      </linearGradient>
      <linearGradient id="cubeInner" x1="0" y1="0" x2="0" y2="1">
        <stop offset="0" stopColor="#e2e4e6" />
        <stop offset="1" stopColor="#d4d5d7" />
      </linearGradient>
      <filter id="soft" x="-30%" y="-60%" width="160%" height="220%">
        <feGaussianBlur stdDeviation="8" />
      </filter>
    </defs>
    <path d="M58 160L164 156 180 180 154 186H66L48 182z" fill="#000" opacity=".260" filter="url(#soft)" />
    <path d="M69 62h88l8 15H59z" fill="#f1f1f1" stroke="#b0b0b0" strokeDasharray="12 5" />
    <path d="M59 77h106l-2 100H62z" fill="url(#cubeFace)" stroke="#b0b0b0" strokeDasharray="14 6" />
    <path d="M79 97h66l-1 63H80z" fill="url(#cubeInner)" />
    <text x="112.500" y="138.500" textAnchor="middle" fontSize="28" fontWeight="700" fill="#949aa0" textLength="58" lengthAdjust="spacingAndGlyphs">
      BACK
    </text>
    <text transform="matrix(-1 0 0 -.400 113 67)" textAnchor="middle" fontSize="13" fontWeight="700" fill="#b4b7ba" textLength="41" lengthAdjust="spacingAndGlyphs">
      TOP
    </text>
    <path d="M158.500 48v17" stroke="#8484ff" strokeWidth="2" />
    <path d="M57 146.500h3" stroke="#ff8080" strokeWidth="2" />
    <path d="M163 172l3 12" stroke="#7fe07f" strokeWidth="2" />
    <g fontSize="30" fontWeight="500" textAnchor="middle">
      <text x="158.500" y="45" fill="#8080ff" stroke="#8080ff" strokeWidth=".600">Z</text>
      <text x="45.500" y="157" fill="#ff8080" stroke="#ff8080" strokeWidth=".600" textLength="15" lengthAdjust="spacingAndGlyphs">X</text>
      <text x="168" y="203" fill="#76f976" stroke="#76f976" strokeWidth=".600" textLength="13" lengthAdjust="spacingAndGlyphs">Y</text>
    </g>
  </svg>
);

/* ---------- gate model ---------- */

const FACE = "#70716b";
const TOP = "#b3b2ac";
const LEDGE = "#999a94";
const EDGE = "#a6a292";
const BLACK = "#151512";

const Pillar = ({ dx = 0, dy = 0 }) => (
  <g transform={`translate(${dx} ${dy})`} stroke={BLACK} strokeWidth="1.200" strokeLinejoin="round">
    <path d="M561.500 783V1074.300L789.300 1075L791.500 1022V785L785 779.500z" fill="#33342f" />
    <path d="M561.500 783L564 727.500Q564.500 723.500 568 723.300L786 723.800Q791.500 725 791.500 730L790.500 785L784 781H568z" fill="#b9b8b4" />
    <path d="M561.500 782L564 727.500Q564.500 723.500 568 723.300H570L567.500 780.500z" fill="#aca99e" />
    <path d="M782.500 780.500L785 724Q791.500 725 791.500 730L790.500 785z" fill="#a5a297" />
    <path d="M561.500 814L574.500 817L561.500 840zM789 814L776 817L789 841z" fill="#bdb9ab" />
    <path
      d="M561.500 784Q562 780.300 567 780.300L783 780.800L789.300 784.500V811Q788 817 783 817H776L789.300 841.500V1075L561.500 1074.300V840L574.500 817H567Q561.500 816 561.500 811z"
      fill={FACE}
    />
  </g>
);

const NODES = [895.8, 1006.4, 1117.2, 1227.8, 1338.5];
const LEFT_LEAF = "M795.300 799.300H833.700V817.500H1401V799.300H1439V1056.700H833.700V1074.500H795.300z";
const RIGHT_LEAF = "M795.300 799.300H833.700V817.500H1401V799.300H1439V1075H1401V1056.700H795.300z";

const Leaf = ({ dx = 0, outline, rivets }) => (
  <g transform={`translate(${dx} 0)`} stroke={BLACK} strokeWidth="1.200" strokeLinejoin="round">
    <path d="M833.700 811.500H1401V818H833.700z" fill={TOP} />
    <path d="M795.300 792.700H833.700V800H795.300zM1401 792.700H1439V800H1401z" fill={TOP} />
    <path d={outline} fill={FACE} />
    {[0, 1].map((m) => (
      <g key={m} transform={m ? "matrix(-1 0 0 1 2234.700 0)" : undefined}>
        <path d="M833.700 854.500H837L882.700 931H833.700z" fill={LEDGE} />
        <path d="M833.700 854.500H837L878.700 924.500H833.700z" fill="#fff" />
        <path d="M833.700 943.300H882.700L837 1020H833.700z" fill={EDGE} />
        <path d="M833.700 943.300H877.500L837 1011.500V1013.500H833.700z" fill="#fff" />
      </g>
    ))}
    {NODES.map((n) => (
      <g key={n}>
        <path d={`M${n - 45.7} 854.500H${n + 45.7}L${n} 930z`} fill={EDGE} />
        <path d={`M${n - 41} 854.500H${n + 41}L${n} 923.500z`} fill="#fff" />
        <path d={`M${n} 923.500V930`} />
        <path d={`M${n} 944L${n + 45.7} 1020H${n - 45.7}z`} fill={LEDGE} />
        <path d={`M${n} 944L${n + 41.7} 1013.400H${n - 41.7}z`} fill="#fff" />
      </g>
    ))}
    {NODES.slice(0, 4).map((n) => {
      const m = n + 55.3;
      return (
        <g key={m}>
          <path d={`M${m} 860.300L${m + 42.3} 931H${m - 42.3}z`} fill={LEDGE} />
          <path d={`M${m} 860.300L${m + 38.4} 924.500H${m - 38.4}z`} fill="#fff" />
          <path d={`M${m - 42.5} 943.300H${m + 42.5}L${m} 1014.500z`} fill={EDGE} />
          <path d={`M${m - 38} 943.300H${m + 38}L${m} 1008z`} fill="#fff" />
          <path d={`M${m} 1008V1014.500`} />
        </g>
      );
    })}
    <g fill="none" strokeWidth="1.300">
      {NODES.map((n) => (
        <circle key={n} cx={n} cy="937" r="6.500" />
      ))}
      {rivets.map((x) =>
        [836, 1038].map((y) => <circle key={`${x}-${y}`} cx={x} cy={y} r="6.500" />)
      )}
    </g>
  </g>
);

const Model = () => (
  <Scene width="2880" height="1466" viewBox="0 168 2880 1466">
    <defs>
      <linearGradient id="fadeL" x1="0" x2="1">
        <stop offset="0" stopColor="#000" stopOpacity="0" />
        <stop offset="1" stopColor="#000" stopOpacity=".100" />
      </linearGradient>
      <linearGradient id="fadeR" x1="1" x2="0">
        <stop offset="0" stopColor="#000" stopOpacity="0" />
        <stop offset="1" stopColor="#000" stopOpacity=".120" />
      </linearGradient>
    </defs>
    <path d="M549 1018h13v55h-13z" fill="url(#fadeL)" />
    <path d="M2317 1022h14v56h-14z" fill="url(#fadeR)" />
    <path d="M790 1019h6v50h-6zM2083 1021h6v50h-6z" fill="#e6e6e6" />
    <path d="M788 1069L2090 1071.500V1077.500L788 1074.500z" fill="#cbcbcb" />
    <Pillar />
    <Pillar dx={1527.4} dy={3.8} />
    <g transform="matrix(1 .0022 0 1 0 -1.840)">
      <Leaf outline={LEFT_LEAF} rivets={[814, 1421]} />
      <Leaf dx={643.4} outline={RIGHT_LEAF} rivets={[813.2, 1420]} />
    </g>
  </Scene>
);

/* ---------- data ---------- */

const TABS = [
  { name: "SOLID", w: 118, gap: 0, active: true },
  { name: "SURFACE", w: 96, gap: 71 },
  { name: "MESH", w: 60, gap: 89 },
  { name: "SHEET METAL", w: 146, gap: 86 },
  { name: "PLASTIC", w: 86, gap: 91 },
  { name: "UTILITIES", w: 98, gap: 89 },
  { name: "MANAGE", w: 94, gap: 88 },
];

const GROUPS = [
  { name: "CREATE", w: 543, pad: 28, nudge: -1, ls: 0.4, icons: [SketchIcon, ExtrudeIcon, RevolveIcon, HoleIcon, PatternIcon, FormIcon] },
  { name: "AUTOMATE", w: 198, pad: 67, nudge: 0, ls: 0.35, icons: [AutomateIcon] },
  { name: "MODIFY", w: 538, pad: 23, nudge: -3, ls: 0, icons: [PressPullIcon, FilletIcon, ShellIcon, CombineIcon, SplitIcon, MoveIcon] },
  { name: "ASSEMBLE", w: 280, pad: 23, nudge: -1, ls: 0.1, icons: [ComponentIcon, JointIcon, BomIcon] },
  { name: "CONFIGURE", w: 206, pad: 29, nudge: -3, ls: 0.05, icons: [ConfigureIcon, ConfigureTableIcon] },
  { name: "CONSTRUCT", w: 208, pad: 73, nudge: 0, ls: 0.35, icons: [ConstructIcon] },
  { name: "INSPECT", w: 158, pad: 47, nudge: 2, ls: 0, icons: [InspectIcon] },
  { name: "INSERT", w: 280, pad: 23, nudge: -3, ls: 0, icons: [LinkIcon, BoltIcon, PictureIcon] },
];

const NODES_TREE = [
  { name: "Document Settings", w: 284, glyphs: ["gear"], gap: 20, ls: 0.15 },
  { name: "Named Views", w: 228, glyphs: ["folder"], gap: 28, ls: 0.2 },
  { name: "Origin", w: 206, glyphs: ["off", "folder"], gap: 28, ls: 0.1 },
  { name: "Bodies", w: 206, glyphs: ["eye", "folder"], gap: 27, ls: 0.05 },
  { name: "Sketches", w: 230, glyphs: ["eye", "folder"], gap: 28, ls: 0.1 },
];

const glyphFor = {
  gear: <Gear size={26} color="#7f7f7f" />,
  folder: <Folder />,
  eye: <Eye />,
  off: <EyeOff />,
};

const PLAYER = [
  { w: 22, mr: 26, d: "M0 4h3v24H0zM22 4v24L4 16z" },
  { w: 26, mr: 26, d: "M20 4v24L0 16zM22 12h4v10h-4z" },
  { w: 24, mr: 24, d: "M0 0v30L24 15z" },
  { w: 26, mr: 26, d: "M6 4v24L26 16zM0 12h4v10H0z" },
  { w: 22, mr: 0, d: "M0 4v24L18 16zM19 4h3v24h-3z" },
];

const FEATURES = [
  <SketchFeature />,
  <ExtrudeFeature />,
  <SketchFeature />,
  <MoveFeature />,
  <ExtrudeFeature />,
  <ExtrudeFeature />,
  <ExtrudeFeature />,
  <ExtrudeFeature />,
  <CopyFeature color="#d9381e" ghost />,
  <CopyFeature color="#5b9bf0" />,
  <MoveFeature />,
];

export default function App() {
  return (
    <Screen>
      <GlobalStyle />
      <Toolbar>
        <Workspace>
          DESIGN
          <Caret $dy={3} />
        </Workspace>
        <Ribbon>
          <Tabs>
            {TABS.map((t) => (
              <Tab key={t.name} $w={t.w} $gap={t.gap} $active={t.active}>
                {t.name}
              </Tab>
            ))}
          </Tabs>
          <Groups>
            {GROUPS.map((g) => (
              <Group key={g.name} $w={g.w}>
                <IconRow $pad={g.pad}>
                  {g.icons.map((I, i) => (
                    <I key={i} />
                  ))}
                </IconRow>
                <GroupLabel $nudge={g.nudge} $ls={g.ls}>
                  {g.name}
                  <Caret $dy={-1} />
                </GroupLabel>
              </Group>
            ))}
            <Group $w={152} $last>
              <IconRow $pad={43}>
                <SelectTile>
                  <SelectIcon />
                </SelectTile>
              </IconRow>
              <GroupLabel $ls={0.4}>
                SELECT
                <Caret $dy={-1} />
              </GroupLabel>
            </Group>
          </Groups>
        </Ribbon>
      </Toolbar>

      <Viewport>
        <Model />
        <BrowserDock>
          <PanelBar $pad={9}>
            <Collapse />
            <PanelTitle>BROWSER</PanelTitle>
            <RoundMark />
          </PanelBar>
          <Tree>
            <TreeRow $root>
              <Twisty $root>
                <RootTwisty />
              </Twisty>
              <Chip $w={408}>
                <Glyph $after={12}>
                  <Eye />
                </Glyph>
                <Selected>
                  <DocCube />
                  <NodeText $ls={0.15}>
                    Gate <DateRun>(12/10/24)</DateRun> v6
                  </NodeText>
                </Selected>
                <Radio />
              </Chip>
            </TreeRow>
            {NODES_TREE.map((n) => (
              <TreeRow key={n.name}>
                <Twisty>
                  <ChildTwisty />
                </Twisty>
                <Chip $w={n.w}>
                  {n.glyphs.map((g, i) => (
                    <Glyph key={g} $after={i === n.glyphs.length - 1 ? n.gap : 18}>
                      {glyphFor[g]}
                    </Glyph>
                  ))}
                  <NodeText $ls={n.ls}>{n.name}</NodeText>
                </Chip>
              </TreeRow>
            ))}
          </Tree>
        </BrowserDock>

        <CubeHolder>
          <ViewCube />
        </CubeHolder>

        <CommentsDock>
          <PanelBar $pad={48} $flat>
            <PanelTitle>COMMENTS</PanelTitle>
            <RoundMark plus />
          </PanelBar>
        </CommentsDock>

        <NavBar>
          <NavItem $ml={8} $gap={10}>
            <Orbit />
            <Caret />
          </NavItem>
          <NavItem $ml={13}>
            <LookAt />
          </NavItem>
          <NavItem $ml={22}>
            <Hand />
          </NavItem>
          <NavItem $ml={22}>
            <Lens />
          </NavItem>
          <NavItem $ml={22} $gap={11}>
            <Lens fit />
            <Caret />
          </NavItem>
          <NavItem $ml={13} $gap={5}>
            <Monitor />
            <Caret />
          </NavItem>
          <NavItem $ml={15} $gap={5}>
            <GridGlyph />
            <Caret />
          </NavItem>
          <NavItem $ml={15} $gap={5}>
            <Panes />
            <Caret />
          </NavItem>
        </NavBar>

        <Badge>
          <svg width="33" height="33" viewBox="0 0 33 33">
            <path d="M16.500 0A16.500 16.500 0 0 1 33 16.500V33H16.500A16.500 16.500 0 0 1 16.500 0z" fill="#000" />
            <path d="M7 17L19 10M7 21.500L25 11M17 20.500L25 16M18 22L25 18.500" stroke="#fff" strokeWidth="1.800" />
            <path d="M11 22l9-4" stroke="#666" strokeWidth="1.500" />
          </svg>
        </Badge>
      </Viewport>

      <Timeline>
        <Player>
          {PLAYER.map((b) => (
            <PlayerButton key={b.d} $w={b.w} $mr={b.mr}>
              <svg width={b.w} height="32" viewBox={`0 0 ${b.w} 32`} fill="#616161">
                <path d={b.d} />
              </svg>
            </PlayerButton>
          ))}
        </Player>
        <Track>
          <Features>
            {FEATURES.map((f, i) => (
              <React.Fragment key={i}>{f}</React.Fragment>
            ))}
          </Features>
          <Ruler>
            {FEATURES.map((_, i) => (
              <Notch key={i} />
            ))}
          </Ruler>
        </Track>
        <Playhead width="24" height="64" viewBox="0 0 24 64">
          <path d="M0 0h24v8l-9 10h-1v46h-4V18H9L0 8z" fill="#616161" />
        </Playhead>
        <Settings>
          <Gear size={30} color="#7f7f7f" />
        </Settings>
      </Timeline>
    </Screen>
  );
}
